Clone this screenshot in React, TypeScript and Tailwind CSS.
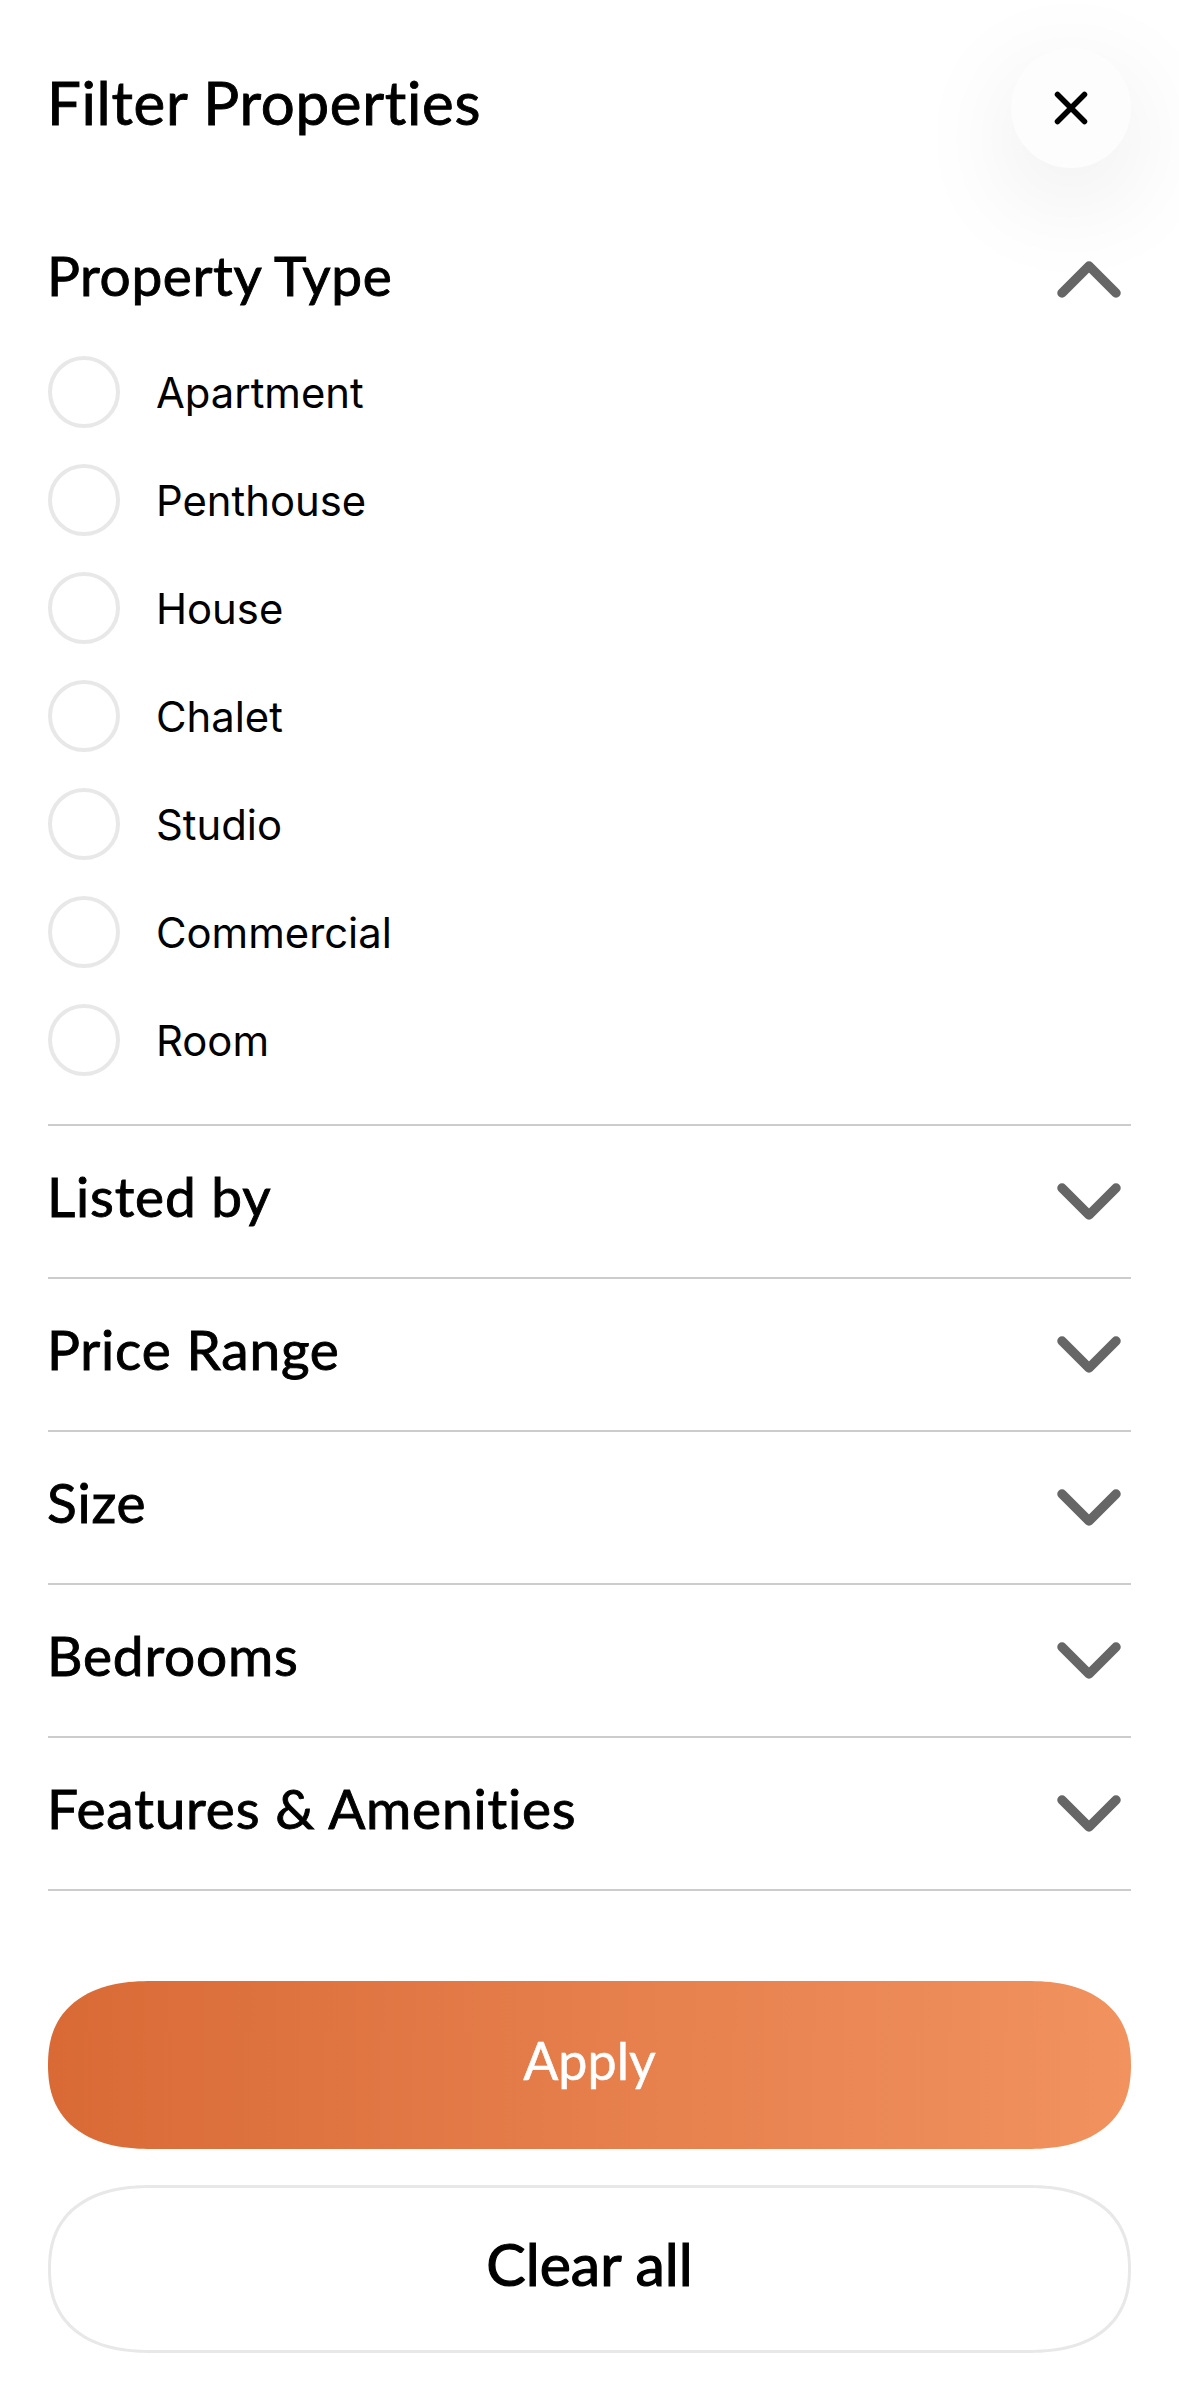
const types = ["Apartment", "Penthouse", "House", "Chalet", "Studio", "Commercial", "Room"];
const sections = ["Listed by", "Price Range", "Size", "Bedrooms", "Features & Amenities"];

function Chevron({ up }: { up?: boolean }) {
  return (
    <svg width="64" height="38" viewBox="0 0 64 38" fill="none" className={up ? "block mt-[6px]" : "block"}>
      <path
        d={up ? "M5 33 L32 6 L59 33" : "M5 5 L32 32 L59 5"}
        stroke="#666666"
        strokeWidth="9.5"
        strokeLinecap="round"
        strokeLinejoin="round"
      />
    </svg>
  );
}

function Heading({ children, up }: { children: React.ReactNode; up?: boolean }) {
  return (
    <span className={up ? "font-['Lato',sans-serif] font-normal text-[55px] leading-[64px] tracking-[0.6px] text-black [-webkit-text-stroke:0.9px_black] mb-[2px] -ml-[1px]" : "font-['Lato',sans-serif] font-normal text-[55px] leading-[64px] tracking-[0.8px] text-black [-webkit-text-stroke:0.9px_black] mb-[12px] -ml-[1px]"}>
      {children}
    </span>
  );
}

export default function App() {
  return (
    <div className="w-[1179px] h-[2400px] bg-white px-12 flex flex-col overflow-hidden">
      <div className="flex items-center justify-between pt-12 h-[168px]">
        <span className="font-['Lato',sans-serif] font-normal text-[60px] leading-[68px] tracking-[0.7px] text-black [-webkit-text-stroke:0.9px_black] mb-[12px] -ml-[1px]">Filter Properties</span>
        <button className="w-[120px] h-[120px] rounded-full bg-[#fdfdfd] flex items-center justify-center shadow-[0_30px_110px_rgba(0,0,0,0.09)]">
          <svg width="40" height="40" viewBox="0 0 40 40" fill="none">
            <path d="M6.5 6.5 L33.5 33.5 M33.5 6.5 L6.5 33.5" stroke="#000" strokeWidth="5.5" strokeLinecap="round" />
          </svg>
        </button>
      </div>

      <div className="flex items-center justify-between h-[108px] mt-[54px] pr-[10px]">
        <Heading up>Property Type</Heading>
        <Chevron up />
      </div>
      <div className="flex flex-col gap-9 mt-[26px] pb-12 border-b-2 border-[#cccccc]">
        {types.map((t) => (
          <div key={t} className="flex items-center gap-9 h-[72px]">
            <span className="w-[72px] h-[72px] rounded-full border-4 border-[#e8e8e8] shrink-0" />
            <span className="font-['Inter',sans-serif] text-[41.8px] text-black leading-[50px] pt-[1px]">{t}</span>
          </div>
        ))}
      </div>

      {sections.map((s) => (
        <div key={s} className="flex items-center justify-between h-[153px] border-b-2 border-[#cccccc] pr-[10px]">
          <Heading>{s}</Heading>
          <Chevron />
        </div>
      ))}

      <button className="mt-[90px] h-[168px] rounded-[104px/84px] [corner-shape:superellipse(1.25)] bg-gradient-to-r from-[#d96a36] to-[#f1925f] font-['Lato',sans-serif] font-normal text-[52px] text-white [-webkit-text-stroke:0.5px_white] pb-[10px]">
        Apply
      </button>
      <button className="mt-9 h-[168px] rounded-[104px/84px] [corner-shape:superellipse(1.25)] bg-white border-[3px] border-[#e8e8e8] font-['Lato',sans-serif] font-normal text-[59px] text-black [-webkit-text-stroke:1.2px_black] pb-[10px]">
        Clear all
      </button>
    </div>
  );
}
